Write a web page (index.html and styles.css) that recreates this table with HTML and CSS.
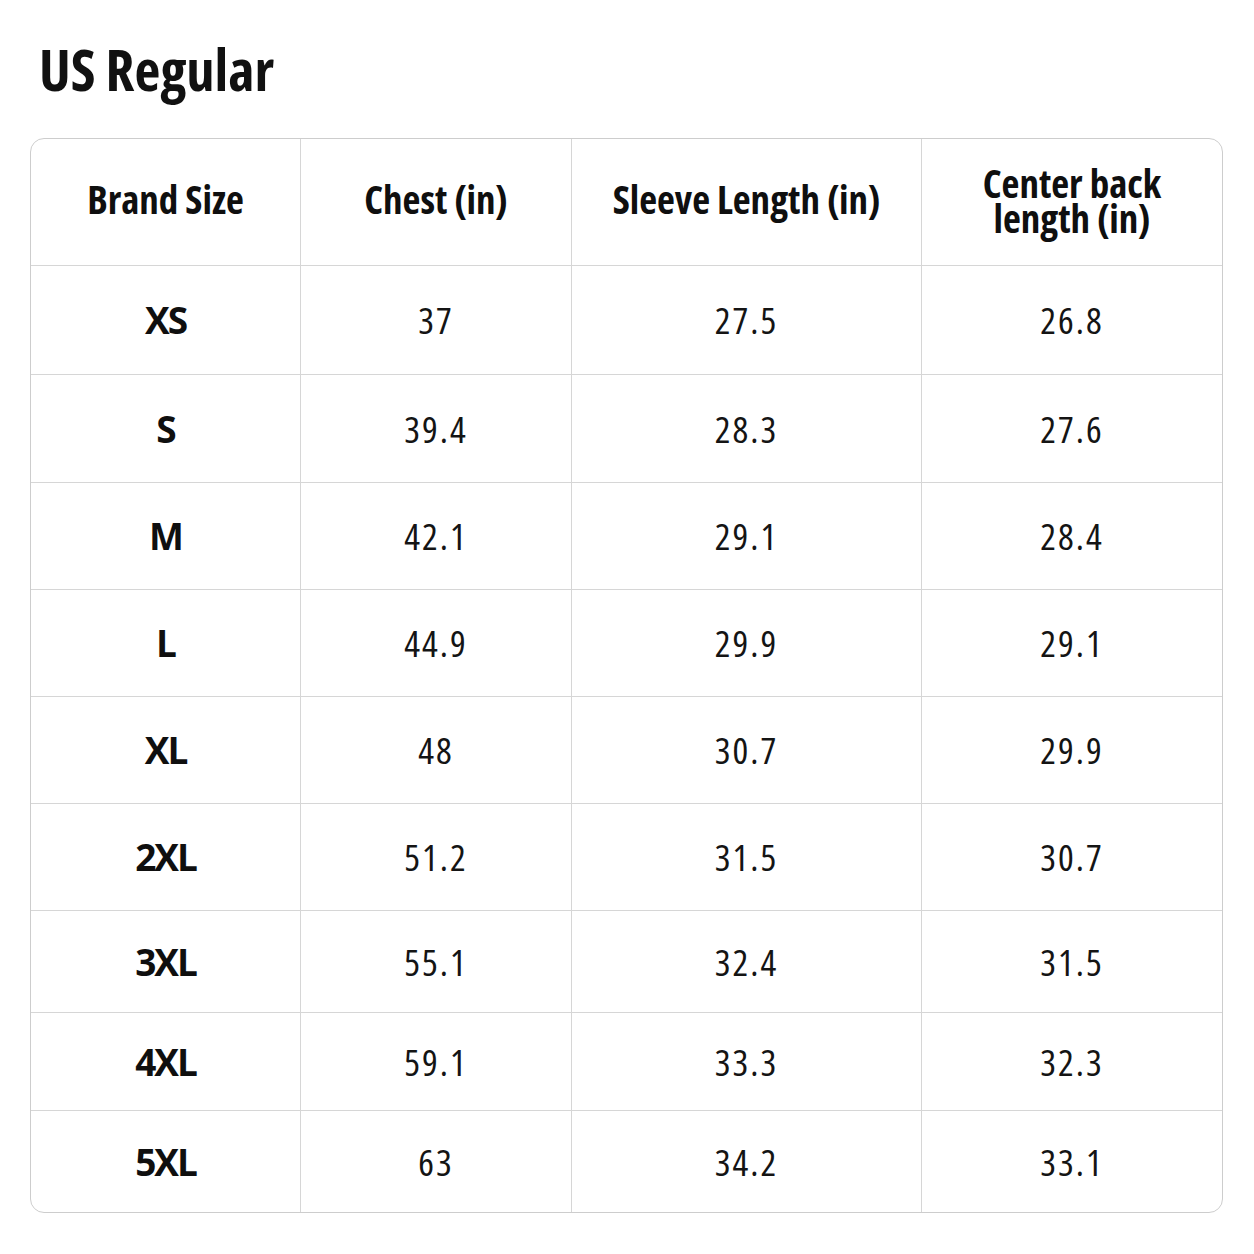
FILE: index.html
```html
<!DOCTYPE html>
<html lang="en">
<head>
<meta charset="utf-8">
<title>US Regular</title>
<link rel="stylesheet" href="styles.css">
</head>
<body>
<h1 class="title">US Regular</h1>
<div class="chart">
  <div class="cell head">Brand Size</div>
  <div class="cell head">Chest (in)</div>
  <div class="cell head">Sleeve Length (in)</div>
  <div class="cell head two last">Center back<br>length (in)</div>

  <div class="cell size">XS</div><div class="cell">37</div><div class="cell">27.5</div><div class="cell last">26.8</div>
  <div class="cell size">S</div><div class="cell">39.4</div><div class="cell">28.3</div><div class="cell last">27.6</div>
  <div class="cell size">M</div><div class="cell">42.1</div><div class="cell">29.1</div><div class="cell last">28.4</div>
  <div class="cell size">L</div><div class="cell">44.9</div><div class="cell">29.9</div><div class="cell last">29.1</div>
  <div class="cell size">XL</div><div class="cell">48</div><div class="cell">30.7</div><div class="cell last">29.9</div>
  <div class="cell size">2XL</div><div class="cell">51.2</div><div class="cell">31.5</div><div class="cell last">30.7</div>
  <div class="cell size">3XL</div><div class="cell">55.1</div><div class="cell">32.4</div><div class="cell last">31.5</div>
  <div class="cell size">4XL</div><div class="cell">59.1</div><div class="cell">33.3</div><div class="cell last">32.3</div>
  <div class="cell size bottom">5XL</div><div class="cell bottom">63</div><div class="cell bottom">34.2</div><div class="cell bottom last">33.1</div>
</div>
</body>
</html>
```
FILE: styles.css
```css
html, body {
  margin: 0;
  padding: 0;
  background: #ffffff;
}
body {
  font-family: "Open Sans", "Liberation Sans", Arial, sans-serif;
  font-stretch: 75%;
  color: #111111;
  width: 1254px;
  height: 1254px;
  overflow: hidden;
}
.title {
  margin: 0;
  padding: 40px 0 0 39px;
  height: 138px;
  box-sizing: border-box;
  font-size: 56.5px;
  line-height: 60px;
  font-weight: 700;
  font-stretch: 87.5%;
  color: #111111;
}
.chart {
  margin-left: 30px;
  width: 1193px;
  box-sizing: border-box;
  border: 1.5px solid #cdcdcd;
  border-radius: 14px;
  overflow: hidden;
  display: grid;
  grid-template-columns: 270px 271px 350px 1fr;
  grid-template-rows: 127px 109px 108px 107px 107px 107px 107px 102px 98px 1fr;
  height: 1075px;
}
.cell {
  display: flex;
  align-items: center;
  justify-content: center;
  text-align: center;
  font-size: 37px;
  line-height: 40px;
  font-stretch: 75%;
  letter-spacing: 2px;
  border-right: 1.5px solid #d6d6d6;
  border-bottom: 1.5px solid #d6d6d6;
  color: #141414;
}
.cell.last { border-right: none; }
.cell.bottom { border-bottom: none; }
.head, .size {
  font-weight: 700;
  color: #0f0f0f;
}
.size {
  font-size: 37px;
  font-stretch: 100%;
  letter-spacing: -2px;
}
.head {
  font-size: 39px;
  font-stretch: 75%;
  letter-spacing: 0;
  padding-bottom: 6px;
}
.head.two {
  font-size: 39px;
  line-height: 35px;
  padding-bottom: 4px;
}
```
